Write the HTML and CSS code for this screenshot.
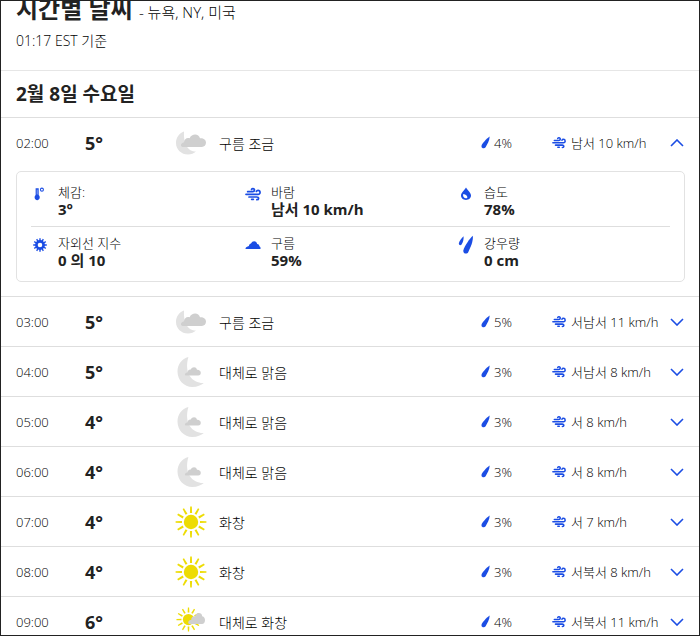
FILE: index.html
```html
<!DOCTYPE html>
<html lang="ko">
<head>
    <meta charset="UTF-8">
    <meta name="viewport" content="width=device-width, initial-scale=1.0">
    <title>시간별 날씨</title>
    <link rel="stylesheet" href="styles.css">
</head>
<body>

    <!-- 아이콘 모음 -->
    <svg class="sprite" aria-hidden="true">
        <symbol id="drop" viewBox="0 0 9 13">
            <path d="M8.6 0.5C8.9 3.6 6.4 8.2 4.6 11.2C3.4 13.1 0.1 12.4 0.5 9.7C0.8 7.7 5.6 2.7 8.6 0.5Z" fill="currentColor"/>
        </symbol>
        <symbol id="wind" viewBox="0 0 24 20">
            <g fill="none" stroke="currentColor" stroke-width="2.6" stroke-linecap="round" stroke-linejoin="round">
                <path d="M4 6.5H11.5C15 6.5 15 2 12 2C11 2 10.2 2.4 9.8 3.2"/>
                <path d="M1.5 10.5H19.5C23.8 10.5 23.3 4.5 19.5 4.5C18.2 4.5 17.4 5.2 17 6.2"/>
                <path d="M6 14.5H17.5C21.5 14.5 21 18.6 17.8 18.6"/>
                <path d="M10 18H12.5"/>
            </g>
        </symbol>
        <symbol id="chevron" viewBox="0 0 14 8">
            <path d="M1 1L7 7L13 1" fill="none" stroke="currentColor" stroke-width="1.6"/>
        </symbol>
        <symbol id="thermometer" viewBox="0 0 16 16">
            <path d="M3 1.5H6.5V9.2C8.8 11.2 7.6 15 4.8 15C2 15 0.8 11.2 3 9.2Z" fill="currentColor"/>
            <path d="M4.8 3V8.5" stroke="#9fb5f7" stroke-width="1"/>
            <circle cx="10.2" cy="3" r="1.7" fill="none" stroke="currentColor" stroke-width="1.2"/>
        </symbol>
        <symbol id="humidity" viewBox="0 0 12 14">
            <path d="M6 0.5C7.5 3.5 11 5.6 11 8.6C11 11.3 8.8 13 6 13C3.2 13 1 11.3 1 8.6C1 5.6 4.5 3.5 6 0.5Z" fill="currentColor"/>
            <path d="M3 7.2C3 11 5 11.6 7.2 11C7.8 9 6.1 7.3 3 7.2Z" fill="#fff"/>
        </symbol>
        <symbol id="uv" viewBox="-7 -7 14 14">
            <circle r="3.6" fill="none" stroke="currentColor" stroke-width="2.6"/>
            <path d="M0 -4V-6.8M0 4V6.8M-4 0H-6.8M4 0H6.8M-2 -3.5L-3.3 -5.8M2 -3.5L3.3 -5.8M-2 3.5L-3.3 5.8M2 3.5L3.3 5.8M-3.5 -2L-5.8 -3.3M3.5 -2L5.8 -3.3M-3.5 2L-5.8 3.3M3.5 2L5.8 3.3" stroke="currentColor" stroke-width="1.4"/>
        </symbol>
        <symbol id="cover" viewBox="0 0 16 10">
            <path d="M0.5 9C0.3 7.3 2.2 6.5 3.9 6C4.1 4.5 5 3.7 6 3.6C7.1 0.2 11.8 0.3 12.2 4.1C13.9 4.3 14.4 5.2 14.3 6.2C15.3 6.6 15.9 7.8 15.4 9Z" fill="currentColor"/>
        </symbol>
        <symbol id="rain" viewBox="0 0 16 20">
            <path d="M5.6 1.2C5.7 4 5.3 7 3.6 9.4C2.5 10.9 0.4 10 0.9 8.1C1.5 5.7 3.6 3.1 5.6 1.2Z" fill="currentColor"/>
            <path d="M14.8 0.8C15.5 6 12.5 12.5 10.2 17.2C8.8 19.8 4.6 18.6 5.4 15.2C6.3 11.4 11.5 3.8 14.8 0.8Z" fill="currentColor"/>
        </symbol>
        <symbol id="partly-cloudy-night" viewBox="0 0 32 32">
            <path d="M9 4.5C4 6.3 1 10.7 1 16C1 22.6 6.4 27.5 13 27.5C16.2 27.5 18.8 26.5 21 24.6C14.8 24.8 8.2 19.5 9 4.5Z" fill="#e2e2e2"/>
            <path d="M7.5 20C4.8 19 6 16 9 15.2C9.2 11.8 12 10.2 14.6 11.2C16.7 6.2 24 6.3 25 11.3C28 10.8 31 12.7 31 15.6C31 18.3 29.3 20 26.8 20Z" fill="#cfcfcf"/>
        </symbol>
        <symbol id="mostly-clear-night" viewBox="0 0 32 32">
            <path d="M13.4 1C6.8 2.4 2.5 8.6 2.5 15.5C2.5 24 9 31 17.4 31C22.2 31 26.3 29.2 28.8 27C18 27.5 8.5 18 13.4 1Z" fill="#e2e2e2"/>
            <path d="M10.5 19.5C9 18.1 10.8 16.4 12.7 16.2C12.8 14.1 14.4 13.2 15.8 13.6C17 10.5 21.4 10.6 22 13.8C24 13.5 25.8 15 25.8 16.8C25.8 18.5 24.8 19.5 23.3 19.5Z" fill="#cfcfcf"/>
        </symbol>
        <symbol id="sun-shape" viewBox="-16 -16 32 32">
            <circle r="7.2" fill="#eddc05"/>
            <path id="ray" d="M-0.8 -15.4H0.8L1.1 -9H-1.1Z" fill="#eddc05"/>
            <use href="#ray" transform="rotate(30)"/>
            <use href="#ray" transform="rotate(60)"/>
            <use href="#ray" transform="rotate(90)"/>
            <use href="#ray" transform="rotate(120)"/>
            <use href="#ray" transform="rotate(150)"/>
            <use href="#ray" transform="rotate(180)"/>
            <use href="#ray" transform="rotate(210)"/>
            <use href="#ray" transform="rotate(240)"/>
            <use href="#ray" transform="rotate(270)"/>
            <use href="#ray" transform="rotate(300)"/>
            <use href="#ray" transform="rotate(330)"/>
        </symbol>
        <symbol id="sunny" viewBox="0 0 32 32">
            <use href="#sun-shape" width="32" height="32"/>
        </symbol>
        <symbol id="mostly-sunny" viewBox="0 0 32 32">
            <use href="#sun-shape" x="1" y="1" width="25" height="25"/>
            <path d="M14 18C12.2 16.2 14 14 16.2 14C16.2 11 18.4 9.8 20 10.4C21.5 5.5 27 6.2 27.2 10.2C31.2 11 30.8 18 27 18Z" fill="#cfcfcf"/>
        </symbol>
    </svg>

    <main class="page">
        <header class="page-header">
            <h1 class="title">시간별 날씨 <span class="location">- 뉴욕, NY, 미국</span></h1>
            <p class="timestamp">01:17 EST 기준</p>
        </header>

        <h2 class="day">2월 8일 수요일</h2>

        <ul class="hours">
            <li class="hour">
                <div class="summary">
                    <span class="time">02:00</span>
                    <span class="temp">5°</span>
                    <svg class="condition"><use href="#partly-cloudy-night"/></svg>
                    <span class="phrase">구름 조금</span>
                    <span class="precip"><svg class="drop-icon"><use href="#drop"/></svg>4%</span>
                    <span class="wind"><svg class="wind-icon"><use href="#wind"/></svg>남서 10 km/h</span>
                    <button class="toggle open" aria-label="접기" aria-expanded="true"><svg class="chevron"><use href="#chevron"/></svg></button>
                </div>
                <ul class="details">
                    <li class="detail">
                        <svg class="detail-icon"><use href="#thermometer"/></svg>
                        <div><span class="label">체감:</span><span class="value">3°</span></div>
                    </li>
                    <li class="detail">
                        <svg class="detail-icon"><use href="#wind"/></svg>
                        <div><span class="label">바람</span><span class="value">남서 10 km/h</span></div>
                    </li>
                    <li class="detail">
                        <svg class="detail-icon"><use href="#humidity"/></svg>
                        <div><span class="label">습도</span><span class="value">78%</span></div>
                    </li>
                    <li class="detail">
                        <svg class="detail-icon"><use href="#uv"/></svg>
                        <div><span class="label">자외선 지수</span><span class="value">0 의 10</span></div>
                    </li>
                    <li class="detail">
                        <svg class="detail-icon"><use href="#cover"/></svg>
                        <div><span class="label">구름</span><span class="value">59%</span></div>
                    </li>
                    <li class="detail">
                        <svg class="detail-icon tall"><use href="#rain"/></svg>
                        <div><span class="label">강우량</span><span class="value">0 cm</span></div>
                    </li>
                </ul>
            </li>
            <li class="hour">
                <div class="summary">
                    <span class="time">03:00</span>
                    <span class="temp">5°</span>
                    <svg class="condition"><use href="#partly-cloudy-night"/></svg>
                    <span class="phrase">구름 조금</span>
                    <span class="precip"><svg class="drop-icon"><use href="#drop"/></svg>5%</span>
                    <span class="wind"><svg class="wind-icon"><use href="#wind"/></svg>서남서 11 km/h</span>
                    <button class="toggle" aria-label="펼치기" aria-expanded="false"><svg class="chevron"><use href="#chevron"/></svg></button>
                </div>
            </li>
            <li class="hour">
                <div class="summary">
                    <span class="time">04:00</span>
                    <span class="temp">5°</span>
                    <svg class="condition"><use href="#mostly-clear-night"/></svg>
                    <span class="phrase">대체로 맑음</span>
                    <span class="precip"><svg class="drop-icon"><use href="#drop"/></svg>3%</span>
                    <span class="wind"><svg class="wind-icon"><use href="#wind"/></svg>서남서 8 km/h</span>
                    <button class="toggle" aria-label="펼치기" aria-expanded="false"><svg class="chevron"><use href="#chevron"/></svg></button>
                </div>
            </li>
            <li class="hour">
                <div class="summary">
                    <span class="time">05:00</span>
                    <span class="temp">4°</span>
                    <svg class="condition"><use href="#mostly-clear-night"/></svg>
                    <span class="phrase">대체로 맑음</span>
                    <span class="precip"><svg class="drop-icon"><use href="#drop"/></svg>3%</span>
                    <span class="wind"><svg class="wind-icon"><use href="#wind"/></svg>서 8 km/h</span>
                    <button class="toggle" aria-label="펼치기" aria-expanded="false"><svg class="chevron"><use href="#chevron"/></svg></button>
                </div>
            </li>
            <li class="hour">
                <div class="summary">
                    <span class="time">06:00</span>
                    <span class="temp">4°</span>
                    <svg class="condition"><use href="#mostly-clear-night"/></svg>
                    <span class="phrase">대체로 맑음</span>
                    <span class="precip"><svg class="drop-icon"><use href="#drop"/></svg>3%</span>
                    <span class="wind"><svg class="wind-icon"><use href="#wind"/></svg>서 8 km/h</span>
                    <button class="toggle" aria-label="펼치기" aria-expanded="false"><svg class="chevron"><use href="#chevron"/></svg></button>
                </div>
            </li>
            <li class="hour">
                <div class="summary">
                    <span class="time">07:00</span>
                    <span class="temp">4°</span>
                    <svg class="condition"><use href="#sunny"/></svg>
                    <span class="phrase">화창</span>
                    <span class="precip"><svg class="drop-icon"><use href="#drop"/></svg>3%</span>
                    <span class="wind"><svg class="wind-icon"><use href="#wind"/></svg>서 7 km/h</span>
                    <button class="toggle" aria-label="펼치기" aria-expanded="false"><svg class="chevron"><use href="#chevron"/></svg></button>
                </div>
            </li>
            <li class="hour">
                <div class="summary">
                    <span class="time">08:00</span>
                    <span class="temp">4°</span>
                    <svg class="condition"><use href="#sunny"/></svg>
                    <span class="phrase">화창</span>
                    <span class="precip"><svg class="drop-icon"><use href="#drop"/></svg>3%</span>
                    <span class="wind"><svg class="wind-icon"><use href="#wind"/></svg>서북서 8 km/h</span>
                    <button class="toggle" aria-label="펼치기" aria-expanded="false"><svg class="chevron"><use href="#chevron"/></svg></button>
                </div>
            </li>
            <li class="hour">
                <div class="summary">
                    <span class="time">09:00</span>
                    <span class="temp">6°</span>
                    <svg class="condition"><use href="#mostly-sunny"/></svg>
                    <span class="phrase">대체로 화창</span>
                    <span class="precip"><svg class="drop-icon"><use href="#drop"/></svg>4%</span>
                    <span class="wind"><svg class="wind-icon"><use href="#wind"/></svg>서북서 11 km/h</span>
                    <button class="toggle" aria-label="펼치기" aria-expanded="false"><svg class="chevron"><use href="#chevron"/></svg></button>
                </div>
            </li>
        </ul>
    </main>

</body>
</html>
```
FILE: styles.css
```css
* {
    box-sizing: border-box;
}
body {
    margin: 0;
    font-family: "Open Sans", "Noto Sans CJK KR", sans-serif;
    font-size: 13px;
    color: #222;
    background: #fff;
}
h1, h2, p, ul {
    margin: 0;
    padding: 0;
}
ul {
    list-style: none;
}
svg {
    display: block;
}
.sprite {
    position: absolute;
    width: 0;
    height: 0;
}
.page {
    height: 100vh;
    overflow: hidden;
    border: 1px solid #222;
}

/* 제목 */
.page-header {
    margin-top: -8px;
    padding: 0 15px 19px;
    border-bottom: 1px solid #e6e6e6;
}
.title {
    font-size: 24px;
    line-height: 32px;
    font-weight: 700;
}
.location {
    font-size: 15px;
    line-height: 16px;
    font-weight: 300;
    color: #000;
}
.timestamp {
    margin-top: 6px;
    font-size: 14px;
    line-height: 20px;
    font-weight: 300;
    color: #000;
}
.day {
    padding: 0 15px;
    font-size: 19px;
    line-height: 46px;
    border-bottom: 1px solid #dedede;
}

/* 시간별 목록 */
.hour {
    padding: 0 14px 0 15px;
    border-bottom: 1px solid #dedede;
}
.summary {
    display: grid;
    grid-template-columns: 69px 90px 44px 1fr 71px 118px 15px;
    align-items: center;
    height: 49px;
    font-weight: 300;
    color: #000;
    white-space: nowrap;
}
.temp {
    font-size: 18px;
    font-weight: 700;
    color: #222;
}
.condition {
    width: 32px;
    height: 32px;
}
.phrase {
    font-size: 14px;
}
.precip, .wind {
    display: flex;
    align-items: center;
}
.precip {
    gap: 4px;
}
.wind {
    gap: 5px;
}
.drop-icon {
    width: 9px;
    height: 13px;
    color: #1b4de4;
}
.wind-icon {
    width: 14px;
    height: 13px;
    color: #1b4de4;
}
.toggle {
    padding: 0;
    border: none;
    background: none;
    color: #1b4de4;
    cursor: pointer;
}
.chevron {
    width: 14px;
    height: 8px;
}
.open .chevron {
    transform: rotate(180deg);
}

/* 상세 정보 */
.details {
    display: grid;
    grid-template-columns: repeat(3, 1fr);
    margin: 4px 0 14px;
    padding: 12px 14px;
    border: 1px solid #e2e2e2;
    border-radius: 5px;
}
.detail {
    display: flex;
    gap: 10px;
    line-height: 17px;
}
.detail:nth-child(-n+3) {
    padding-bottom: 8px;
    border-bottom: 1px solid #dedede;
}
.detail:nth-child(n+4) {
    padding-top: 8px;
}
.detail-icon {
    width: 16px;
    height: 14px;
    margin: 3px 0 0 1px;
    color: #1b4de4;
}
.tall {
    height: 20px;
    margin-top: 0;
}
.label, .value {
    display: block;
}
.label {
    font-size: 13px;
    font-weight: 300;
    color: #000;
}
.value {
    font-size: 15px;
    font-weight: 700;
}
```
